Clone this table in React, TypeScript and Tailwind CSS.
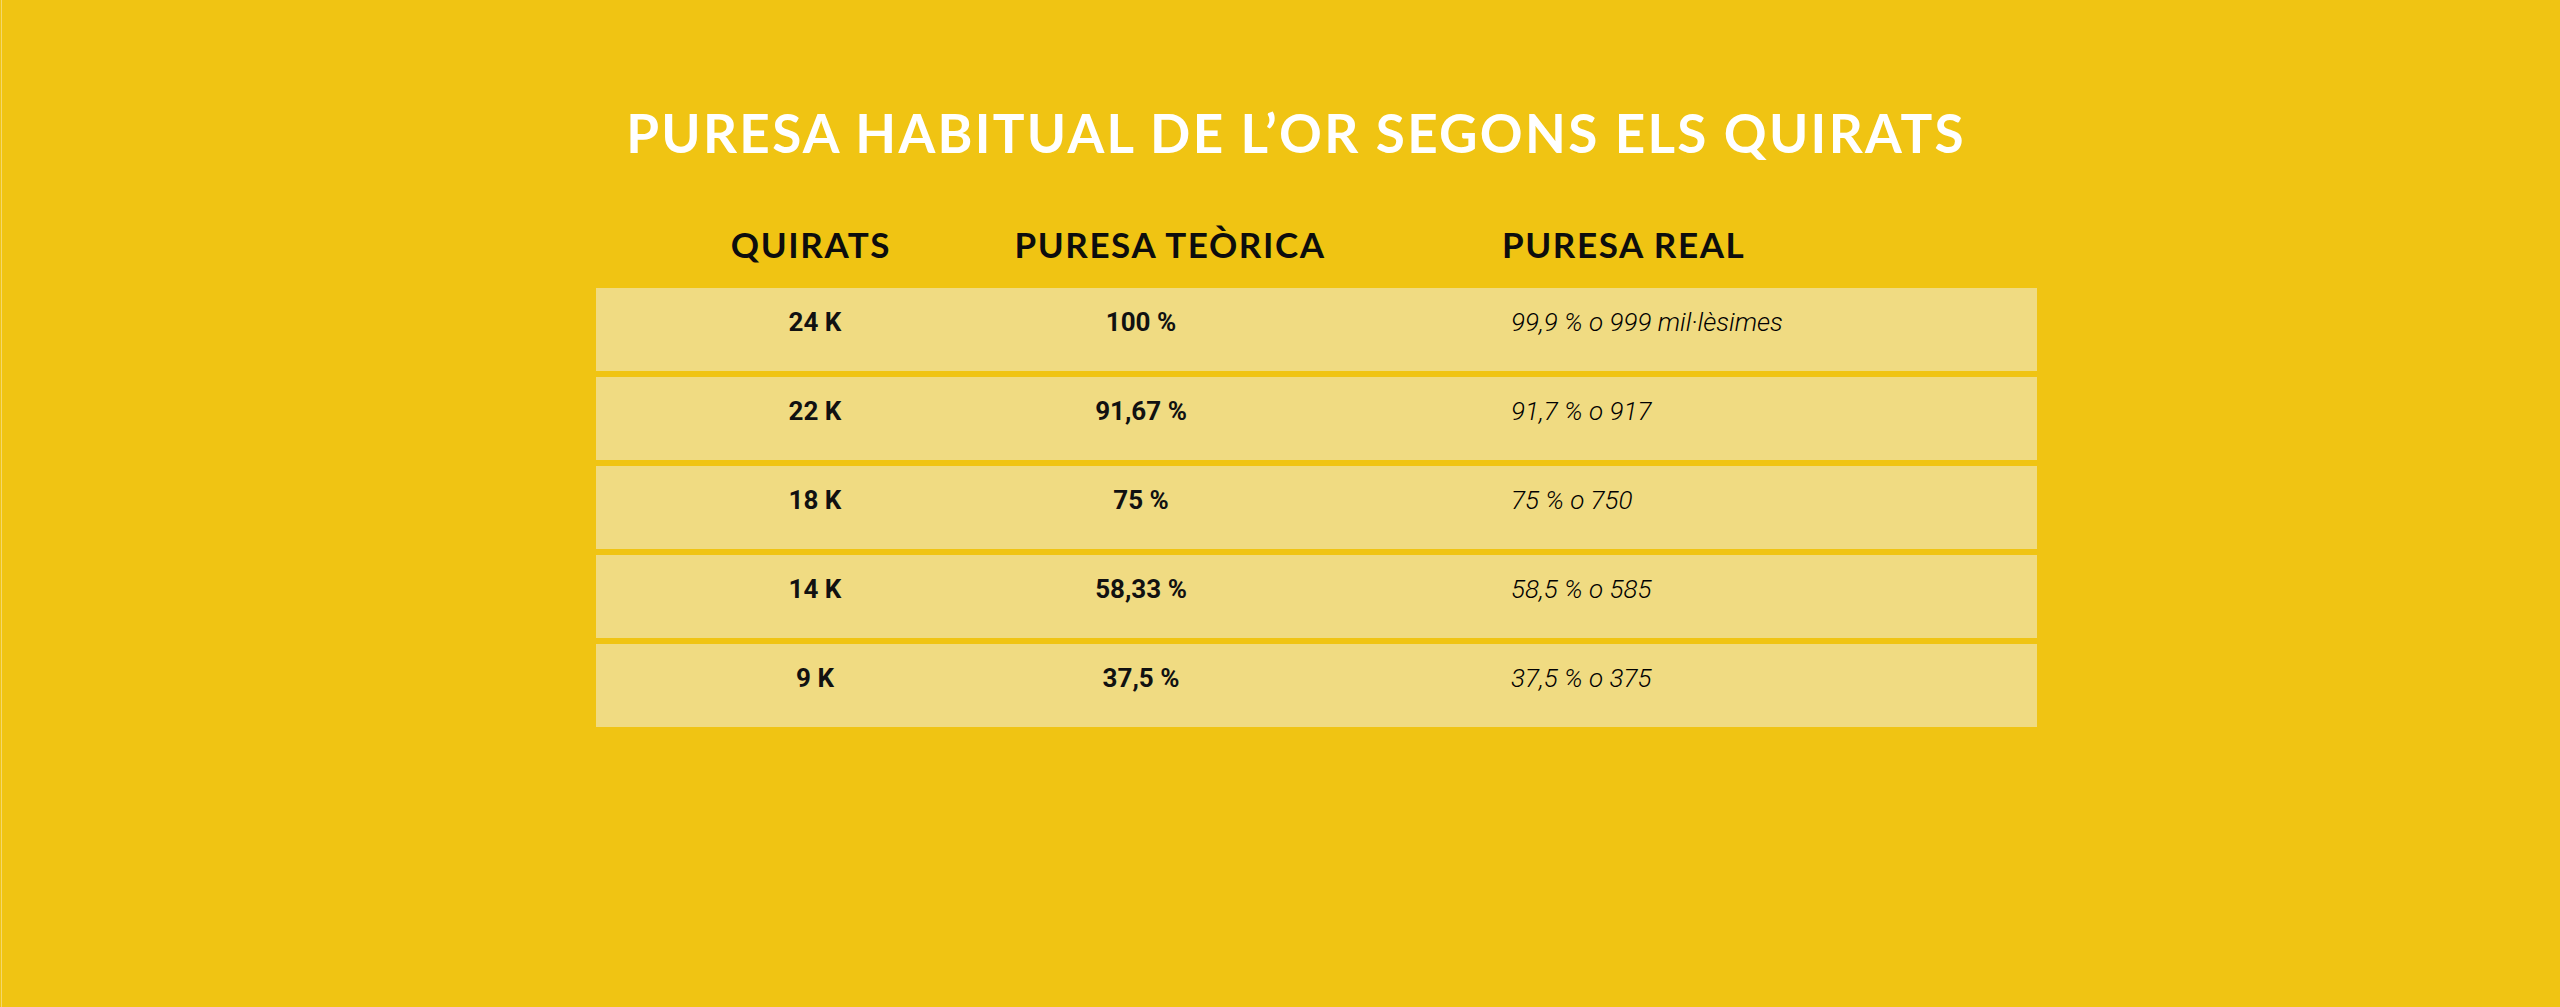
import React from "react";

const rows = [
  { k: "24 K", t: "100 %", r: "99,9 % o 999 mil·lèsimes" },
  { k: "22 K", t: "91,67 %", r: "91,7 % o 917" },
  { k: "18 K", t: "75 %", r: "75 % o 750" },
  { k: "14 K", t: "58,33 %", r: "58,5 % o 585" },
  { k: "9 K", t: "37,5 %", r: "37,5 % o 375" },
];

const head = { fontFamily: "Lato, 'Noto Sans', sans-serif" };
const body = { fontFamily: "Roboto, 'Liberation Sans', sans-serif" };

export default function App() {
  return (
    <div className="w-[2560px] h-[1007px] bg-[#f0c413] shadow-[inset_1px_0_0_#f0c413,inset_2px_0_0_#f4d86c] overflow-hidden">
      <div className="ml-[596px] w-[1441px] pt-[106px] flex flex-col">
        <div className="flex justify-center pr-[41px]">
          <h1
            style={head}
            className="text-white font-bold text-[53px] leading-[53px] tracking-[2.3px] whitespace-nowrap"
          >
            PURESA HABITUAL DE L’OR SEGONS ELS QUIRATS
          </h1>
        </div>
        <div
          style={head}
          className="mt-[68px] grid grid-cols-[430px_288px_1fr] text-[35px] leading-[35px] font-bold tracking-[1.6px] text-[#0d0d0d] whitespace-nowrap"
        >
          <div className="flex justify-center">
            <span>QUIRATS</span>
          </div>
          <div className="flex justify-center">
            <span className="shrink-0">PURESA TEÒRICA</span>
          </div>
          <div className="pl-[188px]">PURESA REAL</div>
        </div>
        <div className="mt-[26px] flex flex-col gap-[6px]">
          {rows.map((row) => (
            <div
              key={row.k}
              style={body}
              className="h-[83px] bg-[#f0db82] grid grid-cols-[438px_214px_1fr] pt-[19px] leading-[30px] text-[#111] items-baseline"
            >
              <div className="text-center font-bold text-[26px]">{row.k}</div>
              <div className="text-center font-bold text-[26px]">{row.t}</div>
              <div className="pl-[263px] italic font-light text-[26px] text-black whitespace-nowrap">{row.r}</div>
            </div>
          ))}
        </div>
      </div>
    </div>
  );
}
